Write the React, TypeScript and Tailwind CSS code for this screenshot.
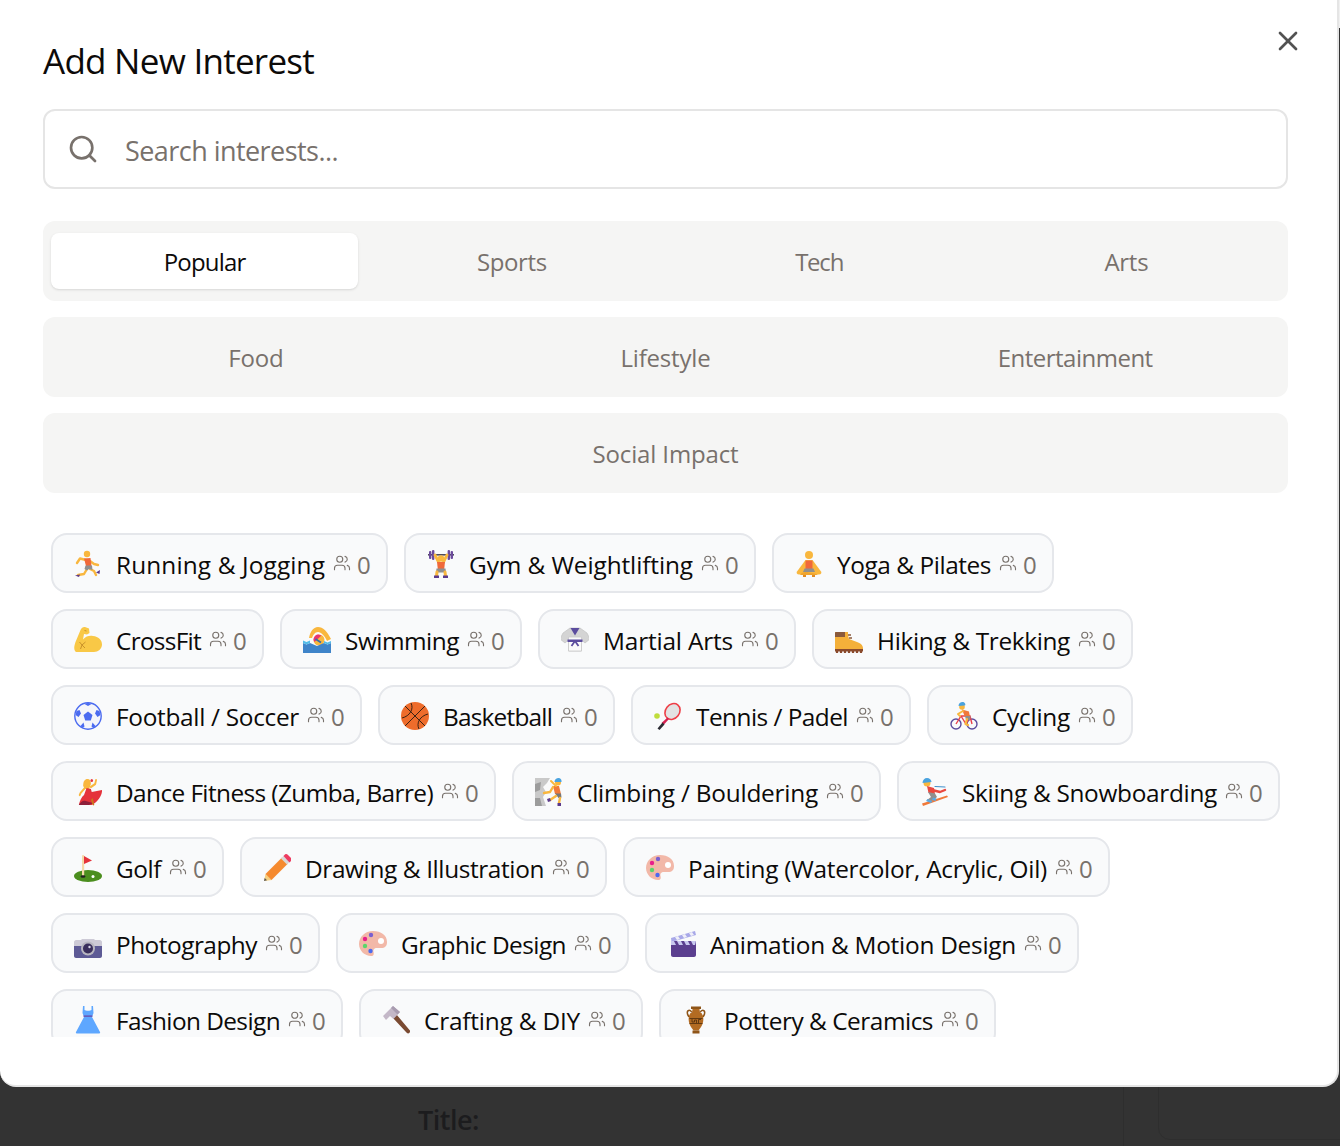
import type { ReactNode } from "react";
import { Search, X, Users } from "lucide-react";

const ctx = document.createElement("canvas").getContext("2d")!;
function track(text: string, size: number, weight: number, target: number) {
  ctx.font = `${weight} ${size}px "Open Sans"`;
  return (target - ctx.measureText(text).width) / text.length;
}

const S = "#F9B73E";
const Line = (p: { d: string; c: string; w?: number }) => (
  <path d={p.d} fill="none" stroke={p.c} strokeWidth={p.w ?? 2.4} strokeLinecap="round" strokeLinejoin="round" />
);

const icons: Record<string, ReactNode> = {
  run: <>
    <Line d="M12 10 6 8.5 3 13" c={S} /><Line d="M16 11 20 14 24 15" c={S} />
    <Line d="M16 19 20 21 22 25" c={S} /><Line d="M13 19 10 24 4 25" c={S} />
    <circle cx="13" cy="4" r="3.2" fill={S} />
    <path d="M10 8.5 16.5 8 17.5 16 12 16Z" fill="#F0693A" />
    <path d="M11.5 15.5H18L18.5 20 15 19 13 20.5 10.5 19Z" fill="#8F8F8F" />
    <path d="M1 25.5 6 24.5 5 27ZM22 22.5 25.5 24 26 20Z" fill="#5B3A8C" />
  </>,
  gym: <>
    <path d="M1 4h26v1.6H1z" fill="#4E4A5A" />
    <rect x="2" y="1" width="2.4" height="8" rx="1" fill="#6B4A9C" /><rect x="5" y="0" width="2.4" height="10" rx="1" fill="#6B4A9C" />
    <rect x="20.6" y="0" width="2.4" height="10" rx="1" fill="#6B4A9C" /><rect x="23.6" y="1" width="2.4" height="8" rx="1" fill="#6B4A9C" />
    <Line d="M8 5 11.5 12" c={S} w={2.8} /><Line d="M20 5 16.5 12" c={S} w={2.8} />
    <circle cx="14" cy="8.5" r="3.2" fill={S} />
    <path d="M10 12h8l-.8 7h-6.4Z" fill="#F0693A" />
    <path d="M9.5 18.5h9L19 22.5H9Z" fill="#8F8F8F" />
    <Line d="M10 22 9.5 26" c={S} w={3} /><Line d="M18 22 18.5 26" c={S} w={3} />
    <path d="M7 25.5h5V28H7ZM16 25.5h5V28h-5Z" fill="#5B3A8C" />
  </>,
  yoga: <>
    <path d="M10.5 10 2 21.5c-1 1.5 0 3 2 3h20c2 0 3-1.5 2-3L17.5 10Z" fill={S} />
    <circle cx="14" cy="5" r="4" fill={S} />
    <path d="M10.5 10.5h7v8.5h-7Z" fill="#F0693A" />
    <path d="M9.5 18.5h9L20 22H8Z" fill="#8F8F8F" />
    <path d="M5 25c2-3 5-3.500 9-2.500s7 .5 9 2.500Z" fill="#EFA42E" />
    <path d="M8 25h3v2H8ZM17 25h3v2h-3Z" fill="#E08A22" />
  </>,
  muscle: <>
    <path d="M1 25C-.5 22.500.5 19 1.500 16L6.500 4C7.500 1.500 9.500.500 11 1L15 2.500 15.500 7 13 8.500 10 8 9 13.500C12 10 15.500 9.500 19 10 24.500 10.500 28 14 28 18.500 28 23 24 26 20 26H3C2 26 1.500 25.800 1 25Z" fill="#F9C846" />
    <path d="M5.500 16 8 19M11.500 16 8 19 6.500 23M8 19 11 22" stroke="#C9922A" strokeWidth="1" fill="none" />
    <path d="M10.500 4.500 12.500 5" stroke="#C9922A" strokeWidth="1" />
  </>,
  swim: <>
    <path d="M6 12C7 6 10 1 15 1 20 1 24 5 28 13L24 15C22 10 18 6 15 6 12 6 10 9 9 12Z" fill="#F9B73E" />
    <circle cx="16" cy="14" r="5.500" fill="#F9B73E" />
    <path d="M10.500 14C10.500 10.500 13 8.500 15.500 8.500L18.500 9.500 11.500 16Z" fill="#E9356F" />
    <path d="M12.500 13 18 16.500" stroke="#3A6EA8" strokeWidth="1.800" />
    <path d="M0 27V17l3.500 1.500L7 17l3.500 1.500L14 20l3.500-1.500L21 17l3.500 1.500L28 17v10Z" fill="#3F84C9" />
    <path d="M0 14.500 3.500 16 7 14.500V17L3.500 18.500 0 17ZM21 15l3.500 1.500L28 15v2l-3.500 1.500L21 17Z" fill="#54BDE8" />
  </>,
  gi: <>
    <path d="M9 2 2 7-1 13l5 4 3.500-3v11h13V14l3.500 3 5-4-3-6-7-5Z" fill="#D4D4D4" stroke="#BDBDBD" strokeWidth=".6" />
    <path d="M7.500 11h13v14h-13Z" fill="#FAFAFA" stroke="#C9C9C9" strokeWidth=".8" />
    <path d="M9.500 2h9L14 9.500Z" fill="#5B4C9E" />
    <path d="M6.500 13.500h15V16h-15Z" fill="#5B4C9E" />
    <path d="M14 15 10.500 20M14 15 17.500 20" stroke="#5B4C9E" strokeWidth="1.800" />
  </>,
  boot: <>
    <path d="M0 6h13v3l1 4 8 3c3 1 6 3 6 6v2H0Z" fill="#F4B03A" />
    <path d="M.5 6H10v5H0V7Z" fill="#8A5A3C" />
    <path d="M13 9h3M14 12h3" stroke="#8A5A3C" strokeWidth="1.300" />
    <path d="M0 23h28v2.500H0Z" fill="#8A4A2C" />
    <path d="M2 25v2M6 25v2M10 25v2M14 25v2M18 25v2M22 25v2M26 25v2" stroke="#8A4A2C" strokeWidth="2.200" />
  </>,
  ball: <>
    <circle cx="14" cy="14" r="13.200" fill="#F4F5FA" stroke="#4B6BF0" strokeWidth="1.400" />
    <path d="M14 9.500 18.500 13 16.800 18.500H11.200L9.500 13Z" fill="#4B6BF0" />
    <path d="M10.500 2 14 4 17.500 2 14 .8ZM2.500 9 5.500 8 7 11.500 4.500 15 1.500 13ZM25.500 9 22.500 8 21 11.500 23.500 15 26.500 13ZM6.500 24 9.500 20.500 10.500 24.500 8.500 26ZM21.500 24 18.500 20.500 17.500 24.500 19.500 26Z" fill="#4B6BF0" />
  </>,
  basket: <>
    <circle cx="14" cy="14" r="14" fill="#EE6C2B" />
    <path d="M4 4 24 24M24 4 4 24M10 1C13 7 9 14 1 16M27 12C19 14 15 21 18 27" stroke="#3B2314" strokeWidth="1" fill="none" />
  </>,
  tennis: <>
    <ellipse cx="18.500" cy="9.500" rx="7" ry="8.500" transform="rotate(38 18.500 9.500)" fill="#E3E3E3" stroke="#EE3F47" strokeWidth="1.600" />
    <path d="M13.500 15.500 15 17 10 22.500 7.500 21Z" fill="#D42050" />
    <path d="M8.500 20.500 10.500 22.500 5.500 28 3.500 26.500Z" fill="#2B2B33" />
    <circle cx="3" cy="14" r="2.800" fill="#BFDD3C" />
  </>,
  bike: <>
    <circle cx="6" cy="22" r="5" fill="none" stroke="#5B4C9E" strokeWidth="1.400" />
    <circle cx="22" cy="22" r="5" fill="none" stroke="#5B4C9E" strokeWidth="1.400" />
    <path d="M6 22 11 14h9l2 8M11 14l5 8 4-8" fill="none" stroke="#E9404A" strokeWidth="1.400" />
    <circle cx="12" cy="5" r="2.800" fill={S} />
    <path d="M8.500 4C8.500 1.500 10.500 0 12.500 0S16 2 15 3.500Z" fill="#4AA3DF" />
    <path d="M12 7.500 19 9.500 20 15 15 15Z" fill="#F0793A" />
    <Line d="M13 9 8 12 10 14" c={S} w={2} />
    <path d="M15 14h5.500L20 18h-4Z" fill="#8F8F8F" />
    <Line d="M17 17 15.500 22 18 23" c={S} w={2.200} />
  </>,
  dance: <g transform="translate(4 0) scale(.86 1)">
    <path d="M6 8C6 3 8 1 11 1s4 2 4 5L13 11 8 11Z" fill={S} />
    <Line d="M8 10 3 15 2 17" c="#F9B73E" w={2.200} /><Line d="M15 9 20 6 21 2" c={S} w={2.200} />
    <circle cx="16" cy="2.500" r="1.500" fill="#E8343F" />
    <path d="M10 10l5 1 1 3 12-2c0 6-5 11-10 14l-2 1H1c1-4 3-8 6-10Z" fill="#E5323B" />
    <path d="M1 27c2-3 5-5 8-4l8 2c-2 1.500-4 2-6 2Z" fill="#8E1F3A" />
    <path d="M17 20l2 7-1.500.5L15 22Z" fill="#C77A1A" />
  </g>,
  climb: <>
    <path d="M0 0h15l-3 5-4 4 3 5-3 5 3 9H0Z" fill="#C9C9C9" />
    <path d="M0 6 6 4 5 12 0 14ZM0 20h5l2 8H0Z" fill="#9C9C9C" />
    <circle cx="23" cy="4.500" r="3" fill={S} /><path d="M19.500 4C19.500 1.500 21.500 0 23.500 0S27 2 26.500 4Z" fill="#4AA3DF" />
    <path d="M18 8h6l2 8H20Z" fill="#F0793A" />
    <Line d="M18 9 15 14 9 15" c={S} /><Line d="M21 8 16 3" c={S} w={2} />
    <path d="M20 15.500h6l.5 4-3 .5Z" fill="#777" />
    <Line d="M21 18 15 22" c={S} /><Line d="M25 20 24 25" c={S} />
    <path d="M12 21l3-1 1 3-3 1ZM22.500 25h3.500v3h-3.500Z" fill="#5B3A8C" />
  </>,
  ski: <>
    <circle cx="7" cy="5" r="3.500" fill={S} />
    <path d="M2.500 5C2.500 2 4.500 0 7 0s4.500 2 4.500 4Z" fill="#4AA3DF" />
    <path d="M7 8 14 10 15 16 8.500 15Z" fill="#E9483F" />
    <Line d="M12 12 20 14 25 12" c="#E9483F" /><Line d="M15 8.500 25 9" c="#3E8FCB" w={1.200} />
    <path d="M8 14 15 15.500 17 19 11 24 7 22 11 19Z" fill="#8F8F8F" />
    <path d="M3 28 28 19 27 17.500 2 25.500Z" fill="#F0793A" />
    <path d="M6 23l5 2 1.500-2-5-2ZM12 22l3.500 1 1-2.500-3.500-1Z" fill="#5BA8E0" />
  </>,
  golf: <>
    <ellipse cx="14" cy="22" rx="14" ry="6" fill="#4B8E1E" />
    <rect x="8" y="1" width="2.200" height="21" rx="1" fill="#F6D9A8" />
    <path d="M10 2 18 6.500 10 10Z" fill="#E5323B" />
    <ellipse cx="9" cy="22.500" rx="2.500" ry="1.200" fill="#222" />
    <circle cx="19" cy="22.500" r="1.500" fill="#fff" />
  </>,
  pencil: <>
    <path d="M1 27 2.500 20 9 26Z" fill="#F6D080" />
    <path d="M1 27 1.700 24 4 26.200Z" fill="#555" />
    <path d="M2.500 20 19 3.500 25 9.500 8.500 26Z" fill="#F58A2F" />
    <path d="M18 4.500 21 1.500 27 7.500 24 10.500Z" fill="#D8D8D8" />
    <path d="M20.500 2 22 .5C23 -.2 24 0 25 1L28 4C28.800 5 28.800 6 28 7L26.500 8.500Z" fill="#EE3B60" />
  </>,
  palette: <>
    <path d="M14 1C6 1 0 7 0 14c0 7 6 12 12 12 3 0 3-2 2.500-4S15 18 18 18h4c4 0 6-2 6-6C28 5 22 1 14 1Z" fill="#F2B8A8" />
    <circle cx="22" cy="11" r="3" fill="#fff" />
    <circle cx="6" cy="9" r="2.200" fill="#E81E8C" />
    <circle cx="12" cy="5" r="2.200" fill="#7A5FD0" />
    <circle cx="6" cy="16" r="2.200" fill="#5AD66B" />
    <circle cx="11.500" cy="21" r="2.200" fill="#4B6BF0" />
  </>,
  camera: <g transform="translate(0 6)">
    <path d="M2 4h5l1-1h12l1 1h5c1 0 2 1 2 2v5H0V6c0-1 1-2 2-2Z" fill="#CDCAD6" />
    <path d="M0 10h28v10c0 1-1 2-2 2H2c-1 0-2-1-2-2Z" fill="#5D5A95" />
    <circle cx="14" cy="12.500" r="7" fill="#B8B6C0" />
    <circle cx="14" cy="12.500" r="5" fill="#3A2F5C" />
    <circle cx="15.500" cy="11" r="1.200" fill="#D8D6E8" />
  </g>,
  clapper: <g transform="translate(2 0)">
    <path d="M1 8 25 1l1 4-24.500 7Z" fill="#A8A8E8" />
    <path d="M5 7 8 6l2 3-3 1ZM12 5l3-1 2 3-3 1ZM19 3l3-1 2 3-3 1Z" fill="#EFEFF8" />
    <path d="M1 11h25v14c0 1-1 2-2 2H3c-1 0-2-1-2-2Z" fill="#5B3F8F" />
    <path d="M1 11h25l-1 4H1Z" fill="#C9C9F0" />
    <path d="M4 11h3l2 4H6ZM11 11h3l2 4h-3ZM18 11h3l2 4h-3Z" fill="#5B3F8F" />
  </g>,
  dress: <>
    <path d="M9 0h1.500v4c1 1 6 1 7 0V0H19l.5 7-1.500 4 8 15c.5 1-.5 1.500-1 1.500H3c-.5 0-1.500-.5-1-1.500l8-15-1.500-4Z" fill="#5EA7FF" />
    <path d="M9.500 9.500h9v1.200h-9Z" fill="#6B3FA0" />
  </>,
  hammer: <>
    <path d="M11 12 14.500 8.500 27.500 24c1 1 .8 2 0 2.800-.8.8-1.800 1-2.800 0Z" fill="#7A4A32" />
    <path d="M1 10 11 0 18 6 11.500 13 8 10 4 14Z" fill="#C4B8C8" />
    <path d="M11 0 18 6 15.500 8.500 9 2Z" fill="#A89CB0" />
  </>,
  pot: <>
    <path d="M9 .5h10V3H9Z" fill="#8F5518" />
    <path d="M10.500 3h7l.5 4H10Z" fill="#B36B22" />
    <path d="M10 6.500C8 3 4.500 4 5.500 8c.6 2.500 2 3 3 3" fill="none" stroke="#8F5518" strokeWidth="1.500" />
    <path d="M18 6.500C20 3 23.500 4 22.500 8c-.6 2.500-2 3-3 3" fill="none" stroke="#8F5518" strokeWidth="1.500" />
    <path d="M8.500 7h11c2 3 2.500 7 1 11-1 3-3 5-4 6.500h-5c-1-1.500-3-3.500-4-6.500-1.500-4-1-8 1-11Z" fill="#B36B22" />
    <path d="M7.500 12.500h13M7.500 17.500h13M10 13v3h2.500v-2h2v3M16.500 17v-3.500H19" fill="none" stroke="#5A3410" strokeWidth=".9" />
    <path d="M10.500 24.500h7V27.500h-7Z" fill="#8F5518" />
  </>,
};

function Emoji({ k }: { k: string }) {
  return <svg viewBox="0 0 28 28" className="w-[28px] h-[28px] shrink-0 translate-y-[1px]">{icons[k]}</svg>;
}

const rows: [string, string, number][][] = [
  [["run", "Running & Jogging", 209], ["gym", "Gym & Weightlifting", 224], ["yoga", "Yoga & Pilates", 154]],
  [["muscle", "CrossFit", 85], ["swim", "Swimming", 114], ["gi", "Martial Arts", 130], ["boot", "Hiking & Trekking", 193]],
  [["ball", "Football / Soccer", 183], ["basket", "Basketball", 109], ["tennis", "Tennis / Padel", 152], ["bike", "Cycling", 78]],
  [["dance", "Dance Fitness (Zumba, Barre)", 317], ["climb", "Climbing / Bouldering", 241], ["ski", "Skiing & Snowboarding", 255]],
  [["golf", "Golf", 45], ["pencil", "Drawing & Illustration", 239], ["palette", "Painting (Watercolor, Acrylic, Oil)", 359]],
  [["camera", "Photography", 141], ["palette", "Graphic Design", 165], ["clapper", "Animation & Motion Design", 306]],
  [["dress", "Fashion Design", 164], ["hammer", "Crafting & DIY", 156], ["pot", "Pottery & Ceramics", 209]],
];

function Fit({ t, w, size, weight = 400 }: { t: string; w: number; size: number; weight?: number }) {
  return <span style={{ letterSpacing: `${track(t, size, weight, w)}px`, width: w }} className="inline-block whitespace-nowrap">{t}</span>;
}

function Chip({ k, t, w }: { k: string; t: string; w: number }) {
  return (
    <div className="h-[60px] shrink-0 flex items-center pl-[21px] pr-[16px] rounded-[16px] border-2 border-[#e5e7eb] bg-[#f9fafb]">
      <Emoji k={k} />
      <span className="ml-[14px] pt-[3px] text-[24.4px] leading-[34px] font-[450] text-[#0c0a09]"><Fit t={t} w={w} size={24.4} weight={450} /></span>
      <Users className="ml-[8px] w-[18px] h-[18px] text-[#78716c] shrink-0" strokeWidth={1.5} />
      <span className="ml-[6px] w-[13px] pt-[3px] text-[24px] leading-[34px] text-[#78716c]">0</span>
    </div>
  );
}

function Tab({ t, w, active }: { t: string; w: number; active?: boolean }) {
  return (
    <div className={active ? "h-[56px] rounded-[8px] bg-white shadow-sm flex items-center justify-center pt-[2px] text-[#0c0a09]" : "flex items-center justify-center pt-[2px]"}>
      <Fit t={t} w={w} size={24} weight={500} />
    </div>
  );
}

export default function App() {
  return (
    <div className="relative h-[1146px] bg-[#333333] overflow-hidden font-['Open_Sans',sans-serif]">
      <div className="absolute left-[1123px] top-[1087px] bottom-0 w-px bg-[#2e2e2e]" />
      <div className="absolute left-[1158px] top-[1060px] w-[300px] h-[80px] rounded-[12px] border border-[#2e2e2e]" />
      <div className="absolute right-0 top-0 w-px h-[28px] bg-[#f0f0f0]" />
      <div className="relative h-[1087px] w-[1339px] bg-white rounded-b-[16px] border-b-2 border-r-2 border-[#e5e5e5] pt-[35px] px-[43px]">
        <h2 className="text-[35px] leading-[52px] font-medium text-[#0c0a09]"><Fit t="Add New Interest" w={271} size={35} weight={500} /></h2>
        <X className="absolute top-[25px] right-[33px] w-[32px] h-[32px] text-[#525252]" strokeWidth={2} />
        <div className="mt-[22px] w-[1245px] h-[80px] rounded-[12px] border-2 border-[#e5e5e5] flex items-center pl-[22px]">
          <Search className="w-[32px] h-[32px] text-[#78716c]" strokeWidth={2} />
          <span className="ml-[26px] pt-[5px] text-[27px] text-[#78716c]"><Fit t="Search interests..." w={213} size={27} /></span>
        </div>
        <div className="mt-[32px] w-[1245px] flex flex-col gap-4 text-[24px] font-medium text-[#78716c]">
          <div className="h-[80px] rounded-[12px] bg-[#f5f5f4] px-[8px] grid grid-cols-4 items-center text-center">
            <Tab t="Popular" w={82} active /><Tab t="Sports" w={70} /><Tab t="Tech" w={48} /><Tab t="Arts" w={44} />
          </div>
          <div className="h-[80px] rounded-[12px] bg-[#f5f5f4] px-[8px] grid grid-cols-3 items-center text-center">
            <Tab t="Food" w={55} /><Tab t="Lifestyle" w={90} /><Tab t="Entertainment" w={155} />
          </div>
          <div className="h-[80px] rounded-[12px] bg-[#f5f5f4] flex items-center justify-center">
            <Tab t="Social Impact" w={146} />
          </div>
        </div>
        <div className="mt-[40px] h-[504px] overflow-hidden px-[8px] flex flex-col gap-4">
          {rows.map((r, i) => (
            <div key={i} className="flex gap-4">
              {r.map(([k, t, w]) => <Chip key={t} k={k} t={t} w={w} />)}
            </div>
          ))}
        </div>
      </div>
      <div className="pl-[418px] pt-[13px] text-[27px] font-semibold text-[#1c1c1e]"><Fit t="Title:" w={61} size={27} weight={600} /></div>
    </div>
  );
}
